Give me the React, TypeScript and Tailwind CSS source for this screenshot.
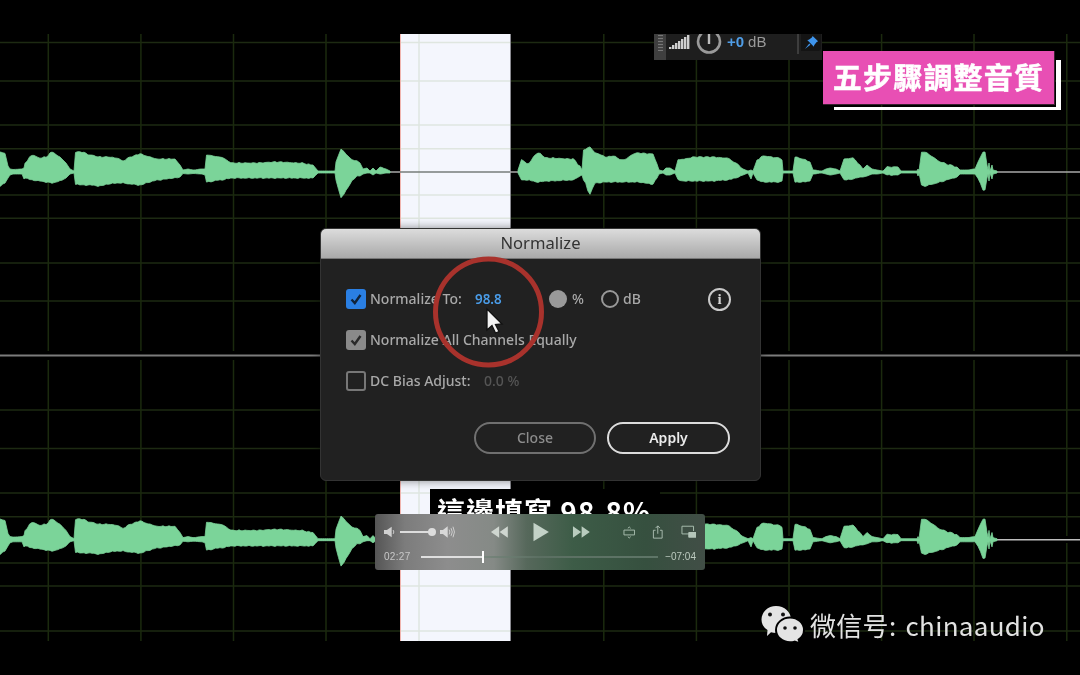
import React from "react";

type P = [number, number, number];
const envA: P[] = [
  [-2,20,15],[5,19,11],[8,6,6],[10,3,3],[13,2.5,2],[22,3,2],[24,4,7],[25,9,6],[32,17,8],[40,14,9],[46,15,10],[52,20,11],[60,15,9],[66,9,6],[70,3,2],[74,1,1],
  [75.5,20,12],[82,20,13],[90,17,13],[100,15,14],[108,15,12],[117,14,11],[123,11,11],[130,15,12],[140,18,13],[150,15,10],[157,13,8],[175,13,6],[180,7,5],[183,2,1.5],[188,3,2],[193,2,1.5],[202,3,2],[205,3,3],
  [206.5,17,10],[220,15,8],[233,9,6],[255,9,6],[277,10,6],[300,9,6],[313,7,6],[318,1,1],[335,1,1],[336,10,8],[341,23,26],[344,20,22],[348,16,15],[352,12,9],[357,11,4],[360,9,4],[363,3,2],[367,4,1],[370,1,1],[373,4,3],[376,1,1],[380,5,2],[386,3,1],[390,1,1],
];
const envB: P[] = [
  [518,2,1],[521.5,13,8],[527,8,8],[538,19,10],[547,14,9],[573,13,8],[580,6,4],[582,2,3],[583.5,22,8],[590,25,22],[595,19,11],[607,15,10],[613,16,10],[622,12,10],[637,19,10],[653,18,12],[657,8,6],[659,2,2],[663,1,1],[666,4,3],[670,4,3],[675,1,1],
  [678,12,8],[684,13,9],[695,15,9],[710,15,9],[727,14,8],[736,9,6],[743,3,3],[748,1,1],[751,2,7],[753,1,1],[757,12,8],[763,16,10],[780,14,10],[782,12,9],[783,1,1],[793,1,1],[795,15,10],[803,13,10],[810,10,9],[813,2,2],[822,1,1],[826,3,2],[830,4,3],[836,3,2],[840,1,1],
  [844,13,8],[853,14,7],[860,7,5],[863,3,5],[867,7,4],[872,3,2],[877,2,2],[883,1,1],[887,5,3],[898,5,3],[901,1,1],[917,1,1],[918,3,4],[919,1,1],[921.5,20,13],[925,20,14],[933,15,12],[940,10,10],[950,7,7],[957,5,5],[960,2,2],[967,2,2],[975,3,2],
  [978,10,6],[983,20,18],[985,20,18],[987,7,6],[988,2,2],[989,9,9],[990,1,1],[992,7,7],[993,2,2],[997,1,1],
];

const dense = (env: P[]): P[] => {
  const out: P[] = [];
  for (let i = 0; i < env.length - 1; i++) {
    const [x0, u0, d0] = env[i];
    const [x1, u1, d1] = env[i + 1];
    const n = Math.max(1, Math.floor((x1 - x0) / 2));
    for (let j = 0; j < n; j++) {
      const t = j / n;
      const s = (1 - Math.cos(Math.PI * t)) / 2;
      const x = x0 + (x1 - x0) * t;
      const big = Math.min(u0, u1) > 4 ? 1 : 0;
      const nu = big * (0.35 * Math.sin(x * 0.9) + 0.25 * Math.sin(x * 1.9));
      const nd = big * (0.35 * Math.sin(x * 1.1 + 1) + 0.2 * Math.sin(x * 0.6));
      out.push([x, u0 + (u1 - u0) * s + nu, d0 + (d1 - d0) * s + nd]);
    }
  }
  out.push(env[env.length - 1]);
  return out;
};
const wavePath = (env: P[], cy: number, k: number) => {
  const d = dense(env);
  const top = d.map(([x, u]) => `${x.toFixed(1)},${(cy - u * k).toFixed(1)}`);
  const bot = [...d].reverse().map(([x, , dn]) => `${x.toFixed(1)},${(cy + dn * k).toFixed(1)}`);
  return top.concat(bot).join(" ");
};
const H = [42.5, 81, 125, 148.8, 195, 218.3, 263, 301, 410, 448.5, 493, 516.7, 563, 586, 631];
const V = [48.3, 140.9, 233.5, 326, 418.6, 603.8, 696.4, 789, 881.6, 974, 1066.8];

function Check({ c }: { c: string }) {
  return (
    <svg width="14" height="14" viewBox="0 0 14 14">
      <path d="M2.5 7.5 L5.8 11 L11.5 3" fill="none" stroke={c} strokeWidth="2.4" />
    </svg>
  );
}

export default function App() {
  return (
    <div className="relative w-[1080px] h-[675px] bg-black overflow-hidden blur-[0.45px] font-['Noto_Sans',sans-serif]">
      <svg className="absolute left-0 top-0" width="1080" height="675">
        {H.map((y) => <line key={y} x1="0" x2="1080" y1={y} y2={y} stroke="#1d2a12" strokeWidth="1.5" />)}
        {V.map((x) => <line key={x} x1={x} x2={x} y1="34" y2="641" stroke="#1b2a0e" strokeWidth="1.5" />)}
        <rect x="0" y="351" width="1080" height="9" fill="#000" />
        <rect x="0" y="536" width="1080" height="7" fill="#000" />
      </svg>

      <div className="absolute left-[400px] top-[34px] w-[111px] h-[607px] bg-[#f4f6fd] border-l border-l-[#f0b4ae] border-r border-r-[#8a8a90]">
        <svg className="absolute left-0 top-0" width="109" height="607">
          {H.map((y) => <line key={y} x1="0" x2="109" y1={y - 34} y2={y - 34} stroke="#dfe6e0" strokeWidth="1.5" />)}
          <line x1="18" x2="18" y1="0" y2="607" stroke="#dfe6e0" strokeWidth="1.5" />
        </svg>
      </div>

      <svg className="absolute left-0 top-0" width="1080" height="675">
        <line x1="0" x2="1080" y1="355.5" y2="355.5" stroke="#7c7c7c" strokeWidth="1.8" />
        <line x1="0" x2="400" y1="172" y2="172" stroke="#a9a9a9" strokeWidth="1.6" />
        <line x1="400" x2="510" y1="172" y2="172" stroke="#777c7a" strokeWidth="1.6" />
        <line x1="510" x2="1080" y1="172" y2="172" stroke="#a9a9a9" strokeWidth="1.6" />
        <line x1="0" x2="400" y1="539.7" y2="539.7" stroke="#bdbdbd" strokeWidth="1.6" />
        <line x1="510" x2="1080" y1="539.7" y2="539.7" stroke="#bdbdbd" strokeWidth="1.6" />
        {[envA, envB].map((e, i) => (
          <React.Fragment key={i}>
            <polygon points={wavePath(e, 172, 1)} fill="#7bd499" stroke="#7bd499" strokeWidth="0.8" strokeLinejoin="round" />
            <polygon points={wavePath(e, 539.7, 1.03)} fill="#7bd499" stroke="#7bd499" strokeWidth="0.8" strokeLinejoin="round" />
          </React.Fragment>
        ))}
      </svg>

      {/* top floating toolbar */}
      <div className="absolute left-[654px] top-[34px] w-[168px] h-[26px] bg-[#1e1e1e] flex overflow-hidden">
        <div className="w-[12px] h-full bg-[#3f3f3f] flex justify-center pt-[1px]">
          <div className="w-[5px] h-[16px] bg-[repeating-linear-gradient(0deg,#777_0,#777_1px,#444_1px,#444_3px)]" />
        </div>
        <svg className="ml-[3px]" width="22" height="16" viewBox="0 0 22 16">
          {[0, 1, 2, 3, 4, 5, 6].map((i) => (
            <rect key={i} x={i * 3} y={13 - i * 2} width="2.4" height={i * 2 + 2} fill="#cfcfcf" />
          ))}
        </svg>
        <svg className="ml-[4px] shrink-0" width="28" height="26" viewBox="0 0 28 26">
          <circle cx="14" cy="7.5" r="11" fill="none" stroke="#9a9a9a" strokeWidth="2.6" />
          <line x1="14" y1="0" x2="14" y2="10" stroke="#bdbdbd" strokeWidth="2.4" />
        </svg>
        <div className="ml-[4px] mt-[-2px] text-[15px] leading-[20px] font-['Liberation_Sans',sans-serif] whitespace-nowrap">
          <span className="text-[#4f9de6] font-bold">+0</span>
          <span className="text-[#9a9a9a] ml-[4px]">dB</span>
        </div>
        <div className="ml-[31px] w-[2px] h-[20px] bg-[#3d3d3d]" />
        <div className="ml-[2px] w-[20px] h-[17px] rounded-br-[3px] bg-[#141414] flex items-center justify-center">
          <svg width="15" height="15" viewBox="0 0 13 13">
            <path d="M7.5 0.8 L12.2 5.5 L10.8 6.2 L8.8 8.8 L8.6 10.2 L2.8 4.4 L4.2 4.2 L6.8 2.2 Z M4.6 7.4 L0.8 12.2 L5.6 8.4 Z" fill="#3f95ec" />
          </svg>
        </div>
      </div>

      {/* pink title */}
      <div className="absolute left-[834px] top-[60px] w-[227px] h-[50px] border-r-[5px] border-b-[3px] border-r-white border-b-white" />
      <div className="absolute left-[823px] top-[51px] w-[232px] h-[54px] bg-[#e84fb4] border-b border-r border-[#3a2030] flex items-center justify-center pb-[2px]">
        <span className="text-white text-[29px] leading-none font-bold tracking-[1.2px] font-['Noto_Sans_CJK_TC',sans-serif] [-webkit-text-stroke:0.5px_white] whitespace-nowrap">五步驟調整音質</span>
      </div>

      {/* caption */}
      <div className="absolute left-[430px] top-[489px] w-[230px] h-[56px] bg-black pl-[7px] pt-[5px] overflow-hidden">
        <span className="text-white text-[28px] leading-[34px] font-bold tracking-[1px] whitespace-nowrap font-['Noto_Sans_CJK_TC',sans-serif]">這邊填寫 98.8%</span>
      </div>

      {/* dialog */}
      <div className="absolute left-[320px] top-[228px] w-[441px] h-[253px] rounded-[6px] bg-[#212121] overflow-hidden flex flex-col border border-[#333] shadow-[0_0_10px_rgba(0,0,0,0.45)]">
        <div className="h-[30px] shrink-0 bg-[linear-gradient(180deg,#dcdcdc,#a9a9a9)] border-b border-[#777] flex items-center justify-center text-[#333] text-[16.6px]">
          Normalize
        </div>
        <div className="flex flex-col pl-[25px] pr-[29px] pt-[29px] text-[#a9a9a9] text-[14px] font-medium leading-[20px]">
          <div className="flex items-center h-[22px]">
            <div className="w-[20px] h-[20px] rounded-[3px] bg-[#2a7fe3] flex items-center justify-center"><Check c="#10233a" /></div>
            <span className="ml-[4px] w-[105px] whitespace-nowrap">Normalize To:</span>
            <span className="text-[#4a9ce8] font-semibold text-[13.4px] w-[74px]">98.8</span>
            <span className="w-[18px] h-[18px] rounded-full bg-[#999]" />
            <span className="ml-[5px] w-[29px]">%</span>
            <span className="w-[18px] h-[18px] rounded-full border-2 border-[#999]" />
            <span className="ml-[4px]">dB</span>
            <div className="ml-auto w-[23px] h-[23px] rounded-full border-2 border-[#c9c9c9] flex items-center justify-center text-[#d5d5d5] text-[15px] font-bold font-['Liberation_Serif',serif]">i</div>
          </div>
          <div className="flex items-center h-[22px] mt-[19px]">
            <div className="w-[20px] h-[20px] rounded-[3px] bg-[#8a8a8a] flex items-center justify-center"><Check c="#2a2a2a" /></div>
            <span className="ml-[4px] whitespace-nowrap">Normalize All Channels Equally</span>
          </div>
          <div className="flex items-center h-[22px] mt-[19px]">
            <div className="w-[20px] h-[20px] rounded-[3px] border-2 border-[#777]" />
            <span className="ml-[4px] w-[114px] whitespace-nowrap">DC Bias Adjust:</span>
            <span className="text-[#555]">0.0 %</span>
          </div>
          <div className="flex justify-end gap-[11px] mt-[30px] pr-[1px]">
            <div className="w-[122px] h-[32px] rounded-full border-2 border-[#707070] flex items-center justify-center text-[#8c8c8c] text-[14px]">Close</div>
            <div className="w-[123px] h-[32px] rounded-full border-2 border-[#dcdcdc] flex items-center justify-center text-[#ececec] text-[14px] font-semibold">Apply</div>
          </div>
        </div>
      </div>

      {/* red circle and cursor */}
      <svg className="absolute left-[425px] top-[250px]" width="130" height="130" viewBox="0 0 130 130">
        <circle cx="63.5" cy="62" r="53" fill="none" stroke="#a8322c" strokeWidth="5" />
        <path d="M62 59 L62 80 L67 75.5 L70.5 83 L74 81.5 L70.5 74.5 L77 74 Z" fill="#f2f2f2" stroke="#111" strokeWidth="1.3" />
      </svg>

      {/* player */}
      <div className="absolute left-[375px] top-[514px] w-[330px] h-[56px] rounded-[3px] bg-[linear-gradient(90deg,#555,#7c7c7c_9%,#8d8d8d_22%,#858a86_36%,#56685b_46%,#3d5c47_60%,#36503f_82%,#414e46)] flex flex-col px-[9px]">
        <div className="h-[36px] shrink-0 flex items-center">
          <svg width="12" height="12" viewBox="0 0 12 12"><path d="M0 4 H3 L8 0.5 V11.5 L3 8 H0 Z" fill="#d0d0d0" /><path d="M9.5 4 Q11 6 9.5 8" stroke="#d0d0d0" fill="none" /></svg>
          <div className="ml-[4px] w-[34px] h-[2px] bg-[#ddd] relative">
            <span className="absolute right-[-4px] top-[-3px] w-[8px] h-[8px] rounded-full bg-[#ddd]" />
          </div>
          <svg className="ml-[8px]" width="16" height="14" viewBox="0 0 16 14"><path d="M0 5 H3 L8 1 V13 L3 9 H0 Z" fill="#d8d8d8" /><path d="M9.5 4.5 Q11 7 9.5 9.5 M11.5 3 Q14 7 11.5 11 M13.5 1.5 Q16.5 7 13.5 12.5" stroke="#d0d0d0" fill="none" /></svg>
          <svg className="ml-[34px]" width="20" height="14" viewBox="0 0 20 14"><path d="M9.5 1 L1 7 L9.5 13 Z M18.5 1 L10 7 L18.5 13 Z" fill="#cfd6d0" /></svg>
          <svg className="ml-[24px]" width="17" height="20" viewBox="0 0 17 20"><path d="M0.5 0.5 L16.5 10 L0.5 19.5 Z" fill="#c3d2c7" /></svg>
          <svg className="ml-[23px]" width="20" height="14" viewBox="0 0 20 14"><path d="M1 1 L9.5 7 L1 13 Z M10 1 L18.5 7 L10 13 Z" fill="#b9ccbe" /></svg>
          <svg className="ml-[31px]" width="13" height="13" viewBox="0 0 13 13"><path d="M1 4 H12 V9 H1 Z" fill="none" stroke="#a9bdaf" /><path d="M5 2.2 L6.5 0.8 L8 2.2 M5 10.8 L6.5 12.2 L8 10.8" fill="none" stroke="#a9bdaf" /></svg>
          <svg className="ml-[17px]" width="12" height="14" viewBox="0 0 12 16"><path d="M3.5 6 H1 V15 H11 V6 H8.5" fill="none" stroke="#b5c6ba" /><path d="M6 10 V1 M3.5 3.5 L6 1 L8.5 3.5" fill="none" stroke="#b5c6ba" /></svg>
          <svg className="ml-[17px]" width="16" height="14" viewBox="0 0 16 14"><path d="M1 1 H13 V6 M8 9 H1 V1" fill="none" stroke="#a9bdaf" /><rect x="7.5" y="7" width="8.5" height="6" rx="1" fill="#b5c6ba" /></svg>
        </div>
        <div className="flex items-center h-[13px] text-[10px] leading-none font-['Liberation_Sans',sans-serif]">
          <span className="w-[37px] text-[#c8c8c8] tracking-[0.3px]">02:27</span>
          <div className="relative w-[238px] h-[2px] bg-[linear-gradient(90deg,#99a09b,#5b6f62_50%,#5e7567)]">
            <div className="absolute left-0 top-0 h-[2px] w-[62px] bg-[#dfdfdf]" />
            <div className="absolute left-[61px] top-[-5px] w-[2px] h-[12px] bg-white" />
          </div>
          <span className="ml-[7px] text-[#bccabf]">−07:04</span>
        </div>
      </div>

      {/* watermark */}
      <div className="absolute left-[761px] top-[605px] flex items-center">
        <svg width="44" height="40" viewBox="0 0 44 40">
          <path d="M15 1 C23.5 1 30 7 30 14.5 C30 22 23.5 28 15 28 C13.3 28 11.6 27.8 10 27.2 L6 31 L6.5 25 C2.6 22.5 0.5 18.8 0.5 14.5 C0.5 7 6.8 1 15 1 Z" fill="#e4e4e4" />
          <path d="M29 12.5 C36.8 12.5 43 18 43 25 C43 29 41 32.4 37.6 34.7 L39 38.5 L33.6 36.6 C32.2 37 30.7 37.2 29 37.2 C21.2 37.2 15 31.7 15 25 C15 18 21.2 12.5 29 12.5 Z" fill="#e4e4e4" stroke="#000" strokeWidth="2" />
          <circle cx="9" cy="9.5" r="2" fill="#111" /><circle cx="22" cy="9.5" r="2" fill="#111" />
          <circle cx="24" cy="23" r="1.8" fill="#111" /><circle cx="34" cy="23" r="1.8" fill="#111" />
        </svg>
        <span className="ml-[5px] text-[26px] leading-[40px] tracking-[0.3px] [word-spacing:3px] text-[#e2e2e2] whitespace-nowrap font-['Noto_Sans_CJK_SC',sans-serif]">微信号: chinaaudio</span>
      </div>
    </div>
  );
}
